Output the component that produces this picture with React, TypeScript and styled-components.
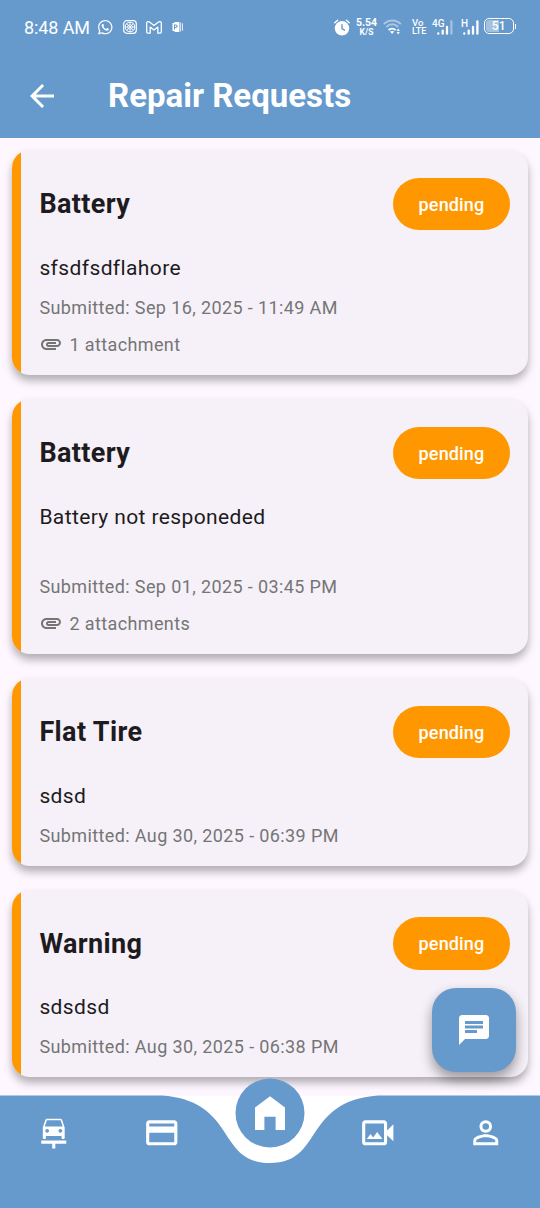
import React from "react";
import styled, { createGlobalStyle } from "styled-components";
import {
  MdArrowBack, MdAttachment, MdCarRepair, MdChat,
  MdOutlinePayment, MdOutlineVideoCameraBack, MdPersonOutline,
} from "react-icons/md";
import { FaWhatsapp } from "react-icons/fa";

const blue = "#6699cc";

const GlobalStyle = createGlobalStyle`
  * { box-sizing: border-box; }
  body { margin: 0; background: #fef7ff; font-family: Roboto, sans-serif; }
  svg { display: block; flex: none; }
`;

const Screen = styled.div`
  position: relative;
  display: flex;
  flex-direction: column;
  width: 540px;
  height: 1208px;
  overflow: hidden;
  background: #fef7ff;
`;

const StatusBar = styled.div`
  display: flex;
  justify-content: space-between;
  align-items: center;
  height: 54px;
  padding: 0 26.5px 0 24px;
  background: ${blue};
  color: #fff;
`;

const StatusGroup = styled.div`
  display: flex;
  align-items: center;
`;

const NotificationIcons = styled.div`
  display: flex;
  align-items: center;
  gap: 9px;
  margin-left: 8px;
`;

const Clock = styled.span`
  font-size: 18px;
  line-height: 22px;
  width: 65px;
  white-space: nowrap;
  letter-spacing: -0.1px;
  margin-top: 2px;
`;

const AppBar = styled.header`
  display: flex;
  align-items: center;
  gap: 48px;
  height: 84px;
  padding: 0 24px;
  background: ${blue};
  color: #fff;
`;

const Title = styled.h1`
  margin: 0;
  font-size: 33px;
  line-height: 42px;
  font-weight: 700;
`;

const List = styled.main`
  flex: 1;
  min-height: 0;
  display: flex;
  flex-direction: column;
  gap: 24px;
  padding: 12px 12px 0;
`;

const Card = styled.article`
  flex: none;
  display: flex;
  border-radius: 18px;
  overflow: hidden;
  background: #f6f1f9;
  box-shadow: 0 6px 9px rgba(0, 0, 0, 0.28), 0 3px 8px rgba(0, 0, 0, 0.03);
`;

const Stripe = styled.div`
  width: 9px;
  background: #ff9800;
`;

const CardBody = styled.div`
  flex: 1;
  padding: 27.75px 18px 17.25px 18.4px;
  letter-spacing: 0.385px;
`;

const CardHeader = styled.div`
  display: flex;
  justify-content: space-between;
  align-items: center;
  height: 52.5px;
  margin-bottom: 22.5px;
`;

const CardTitle = styled.h2`
  margin: 0;
  font-size: 27px;
  font-weight: 700;
  letter-spacing: 0.375px;
  color: #1d1b20;
`;

const Pill = styled.span`
  width: 117px;
  height: 52.5px;
  border-radius: 26.25px;
  background: #ff9800;
  color: #fff;
  font-size: 18px;
  font-weight: 500;
  line-height: 54px;
  letter-spacing: 0.15px;
  text-align: center;
`;

const Description = styled.p`
  margin: 0 0 12px;
  font-size: 21px;
  line-height: 30px;
  letter-spacing: 0.38px;
  white-space: pre-line;
  color: #1d1b20;
`;

const Submitted = styled.p`
  margin: 0;
  font-size: 18px;
  line-height: 25.5px;
  color: #757575;
`;

const Attachments = styled.div`
  display: flex;
  align-items: center;
  gap: 6px;
  height: 25.5px;
  margin: 11.25px 0 0.75px;
  font-size: 18px;
  color: #757575;
`;

const ChatButton = styled.button`
  position: absolute;
  left: 432px;
  top: 987.5px;
  width: 84px;
  height: 84px;
  display: flex;
  align-items: center;
  justify-content: center;
  border: 0;
  border-radius: 24px;
  background: ${blue};
  color: #fff;
  box-shadow: 0 8px 13px rgba(0, 0, 0, 0.3), 0 3px 12px rgba(0, 0, 0, 0.1);
`;

const BottomNav = styled.nav`
  position: relative;
  flex: none;
  height: 112.5px;
  background: #fff;
`;

const NavShape = styled.svg`
  position: absolute;
  left: 0;
  bottom: 0;
`;

const NavItems = styled.div`
  position: relative;
  display: grid;
  grid-template-columns: repeat(5, 1fr);
  justify-items: center;
  align-items: center;
  height: 75px;
  color: #fff;
`;

const HomeButton = styled.svg`
  margin-top: -40px;
`;

const Stacked = styled.span<{ $width: number; $lead?: number; $align: string }>`
  display: flex;
  flex-direction: column;
  align-items: ${(p) => p.$align};
  width: ${(p) => p.$width}px;
  margin-left: ${(p) => p.$lead ?? 0}px;
`;

const StackedLine = styled.span<{ $size: number; $weight: number; $height: number }>`
  font-size: ${(p) => p.$size}px;
  font-weight: ${(p) => p.$weight};
  line-height: ${(p) => p.$height}px;
  height: ${(p) => p.$height}px;
`;

const Signal = styled.span<{ $lead: number }>`
  position: relative;
  display: block;
  margin-left: ${(p) => p.$lead}px;
`;

const SignalLabel = styled.span`
  position: absolute;
  left: 0;
  top: -0.5px;
  font-size: 10px;
  font-weight: 500;
  line-height: 11px;
`;

const Battery = styled.span`
  position: relative;
  display: flex;
  align-items: center;
  justify-content: center;
  width: 29.5px;
  height: 16px;
  margin: -2px 0 0 5px;
  border: 1.3px solid #fff;
  border-radius: 5px;
  background: linear-gradient(90deg, rgba(255, 255, 255, 0.4) 50%, transparent 50%) content-box;
  padding: 1px;
  font-size: 12px;
  font-weight: 500;
  line-height: 14px;
  letter-spacing: 0.3px;
  &::after {
    content: "";
    position: absolute;
    right: -3.5px;
    top: 4.5px;
    width: 1.5px;
    height: 5px;
    background: #fff;
  }
`;

const EmblemIcon = () => (
  <svg width="14" height="14" viewBox="0 0 14 14" fill="none" stroke="#fff">
    <rect x="0.7" y="0.7" width="12.6" height="12.6" rx="3" strokeWidth="1.2" />
    <circle cx="7" cy="7" r="4.8" strokeWidth="1" />
    <path d="M7 2v10M2 7h10M3.5 3.5l7 7M10.5 3.5l-7 7" strokeWidth="0.8" />
    <circle cx="7" cy="7" r="2.4" strokeWidth="0.7" />
  </svg>
);

const MailIcon = () => (
  <svg width="16" height="13" viewBox="0 0 16 13" fill="none" stroke="#fff" strokeWidth="1.3" strokeLinejoin="round">
    <path d="M0.7 2.3C0.7 0.6 2.3 0.2 3.5 1.1L8 4.5l4.5-3.4c1.2-.9 2.8-.5 2.8 1.2v8.8c0 .7-.4 1.1-1.1 1.1h-2.4V6.1L8 9 4.2 6.1v6.1H1.8c-.7 0-1.1-.4-1.1-1.1z" />
  </svg>
);

const AppBadgeIcon = () => (
  <svg width="13" height="10" viewBox="-1.5 0 13 10" fill="#fff">
    <path fillRule="evenodd" d="M0 1h2V0h4.8v10H2V9H0zM1.5 2.6v5h1V6h.9c2.3 0 2.3-3.4 0-3.4zm1 .9h.8c1 0 1 1.6 0 1.6h-.8z" />
    <path d="M7.3.5h.9v9h-.9zM9.4 1.2h.9v7.6h-.9z" />
  </svg>
);

const AlarmIcon = () => (
  <svg width="16" height="17" viewBox="0 0 16 17" fill="none" stroke="#fff" strokeLinecap="round">
    <circle cx="8" cy="9.3" r="7.2" fill="#fff" stroke="none" />
    <path d="M0.8 3.7 3.6 1.2M15.2 3.7 12.4 1.2" strokeWidth="1.5" />
    <path d="M8 5.6v4.1l2.5 1.5" stroke={blue} strokeWidth="1.4" />
  </svg>
);

const WifiIcon = () => (
  <svg width="19" height="16" viewBox="0 0 19 16" fill="none" stroke="#fff" strokeWidth="1.9">
    <path d="M0.8 5.2c4.8-5 12.2-5 17 0M3.4 8c3.5-3.7 8.3-3.7 11.8 0" opacity="0.45" />
    <path d="M5.6 11.2c2-2 5-2 7 0" />
    <path d="M7 12.6c1.1-.9 3.1-.9 4.2 0L9.1 15z" fill="#fff" stroke="none" />
    <path d="M13.6 11.9 15.2 9.4l1.6 2.5zM13.6 12.9l1.6 2.5 1.6-2.5z" fill="#fff" stroke="none" />
  </svg>
);

const SignalBars = ({ offset, faded }: { offset: number; faded?: boolean }) => (
  <svg width={21 - offset} height="18" viewBox={`${offset} 0 ${21 - offset} 18`} fill="none" stroke="#fff" strokeWidth="2.3" strokeLinecap="round">
    <path d="M6.3 15.4v.3M10.7 12.6v3.1M15 9v6.7" />
    <path d="M19.4 3.4v12.3" opacity={faded ? 0.4 : 1} />
  </svg>
);

const HomeIcon = () => (
  <HomeButton width="70" height="70" viewBox="0 0 70 70">
    <circle cx="35" cy="35" r="34.5" fill={blue} />
    <path d="M20 51.9V29.4L35 18.2 50 29.4v22.5h-9.4V38.8H29.4v13.1z" fill="#fff" />
  </HomeButton>
);

interface Request {
  title: string;
  description: string;
  submitted: string;
  attachments?: string;
}

const requests: Request[] = [
  { title: "Battery", description: "sfsdfsdflahore", submitted: "Sep 16, 2025 - 11:49 AM", attachments: "1 attachment" },
  { title: "Battery", description: "Battery not responeded\n\u00a0", submitted: "Sep 01, 2025 - 03:45 PM", attachments: "2 attachments" },
  { title: "Flat Tire", description: "sdsd", submitted: "Aug 30, 2025 - 06:39 PM" },
  { title: "Warning", description: "sdsdsd", submitted: "Aug 30, 2025 - 06:38 PM" },
];

const RequestCard = ({ title, description, submitted, attachments }: Request) => (
  <Card>
    <Stripe />
    <CardBody>
      <CardHeader>
        <CardTitle>{title}</CardTitle>
        <Pill>pending</Pill>
      </CardHeader>
      <Description>{description}</Description>
      <Submitted>Submitted: {submitted}</Submitted>
      {attachments && (
        <Attachments>
          <MdAttachment size={24} />
          <span>{attachments}</span>
        </Attachments>
      )}
    </CardBody>
  </Card>
);

export default function App() {
  return (
    <Screen>
      <GlobalStyle />
      <StatusBar>
        <StatusGroup>
          <Clock>8:48 AM</Clock>
          <NotificationIcons>
            <FaWhatsapp size={16.5} />
            <EmblemIcon />
            <MailIcon />
            <AppBadgeIcon />
          </NotificationIcons>
        </StatusGroup>
        <StatusGroup>
          <AlarmIcon />
          <Stacked $width={33} $align="center">
            <StackedLine $size={10.5} $weight={700} $height={10}>5.54</StackedLine>
            <StackedLine $size={8.5} $weight={700} $height={9}>K/S</StackedLine>
          </Stacked>
          <WifiIcon />
          <Stacked $width={14} $lead={10} $align="flex-start">
            <StackedLine $size={9.5} $weight={500} $height={9}>Vo</StackedLine>
            <StackedLine $size={9} $weight={500} $height={9}>LTE</StackedLine>
          </Stacked>
          <Signal $lead={6}><SignalLabel>4G</SignalLabel><SignalBars offset={0} faded /></Signal>
          <Signal $lead={8}><SignalLabel>H</SignalLabel><SignalBars offset={3} /></Signal>
          <Battery>51</Battery>
        </StatusGroup>
      </StatusBar>
      <AppBar>
        <MdArrowBack size={36} />
        <Title>Repair Requests</Title>
      </AppBar>
      <List>
        {requests.map((r) => (
          <RequestCard key={r.submitted} {...r} />
        ))}
      </List>
      <ChatButton aria-label="Chat">
        <MdChat size={36} />
      </ChatButton>
      <BottomNav>
        <NavShape width="540" height="113" viewBox="0 0 540 113" fill={blue}>
          <path d="M0 .5H162C237.6 6.1 216 68 270 68S302.4 6.1 378 .5H540V113H0z" />
        </NavShape>
        <NavItems>
          <MdCarRepair size={37.5} />
          <MdOutlinePayment size={37.5} />
          <HomeIcon />
          <MdOutlineVideoCameraBack size={37.5} />
          <MdPersonOutline size={37.5} />
        </NavItems>
      </BottomNav>
    </Screen>
  );
}
